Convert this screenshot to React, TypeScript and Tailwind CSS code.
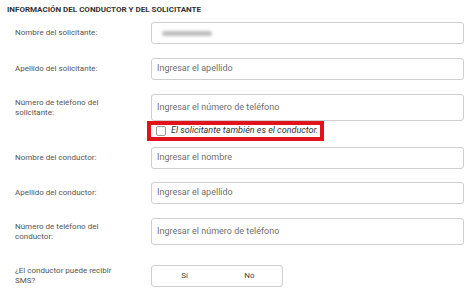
import React from "react";

const Label = ({ children }: { children: React.ReactNode }) => (
  <div className="w-[151px] shrink-0 pl-[15px] pr-[10px] text-[8px] leading-[10px] text-[#555]">{children}</div>
);

const Input = ({ placeholder, tall }: { placeholder?: string; tall?: boolean }) => (
  <div
    className={`w-[313px] ${tall ? "h-[27px]" : "h-[22px]"} border border-[#cfcfcf] rounded-[3px] bg-white flex items-center pl-[5px] text-[9px] text-[#6f6f6f]`}
  >
    {placeholder}
  </div>
);

export default function App() {
  return (
    <div className="w-[476px] h-[301px] bg-white overflow-hidden" style={{ fontFamily: "Roboto, 'Liberation Sans', sans-serif" }}>
      <div className="pl-[7px] pt-[5px] text-[8px] leading-[9px] font-bold text-[#333]">
        INFORMACIÓN DEL CONDUCTOR Y DEL SOLICITANTE
      </div>
      <div className="flex items-center mt-[8px]">
        <Label>Nombre del solicitante:</Label>
        <div className="w-[313px] h-[22px] border border-[#cfcfcf] rounded-[3px] bg-white flex items-center pl-[10px]">
          <div className="w-[50px] h-[5px] rounded-full bg-[#bdbdbd] blur-[1.5px]" />
        </div>
      </div>
      <div className="flex items-center mt-[14px]">
        <Label>Apellido del solicitante:</Label>
        <Input placeholder="Ingresar el apellido" />
      </div>
      <div className="flex items-center mt-[14px]">
        <Label>
          Número de teléfono del
          <br />
          solicitante:
        </Label>
        <Input placeholder="Ingresar el número de teléfono" tall />
      </div>
      <div className="flex">
        <div className="w-[147px] shrink-0" />
        <div className="w-[177px] h-[20px] border-[4px] border-[#e3131d] flex items-center pl-[5px] gap-[5px]">
          <div className="w-[10px] h-[10px] border border-[#9a9a9a] rounded-[2px] bg-white" />
          <span className="text-[9px] italic text-[#333]">El solicitante también es el conductor.</span>
        </div>
      </div>
      <div className="flex items-center mt-[6px]">
        <Label>Nombre del conductor:</Label>
        <Input placeholder="Ingresar el nombre" />
      </div>
      <div className="flex items-center mt-[13px]">
        <Label>Apellido del conductor:</Label>
        <Input placeholder="Ingresar el apellido" />
      </div>
      <div className="flex items-center mt-[14px]">
        <Label>
          Número de teléfono del
          <br />
          conductor:
        </Label>
        <Input placeholder="Ingresar el número de teléfono" tall />
      </div>
      <div className="flex items-center mt-[20px]">
        <Label>
          ¿El conductor puede recibir
          <br />
          SMS?
        </Label>
        <div className="w-[132px] h-[22px] border border-[#cfcfcf] rounded-[3px] bg-white flex text-[8px] text-[#444]">
          <div className="flex-1 flex items-center justify-center">Sí</div>
          <div className="flex-1 flex items-center justify-center">No</div>
        </div>
      </div>
    </div>
  );
}
